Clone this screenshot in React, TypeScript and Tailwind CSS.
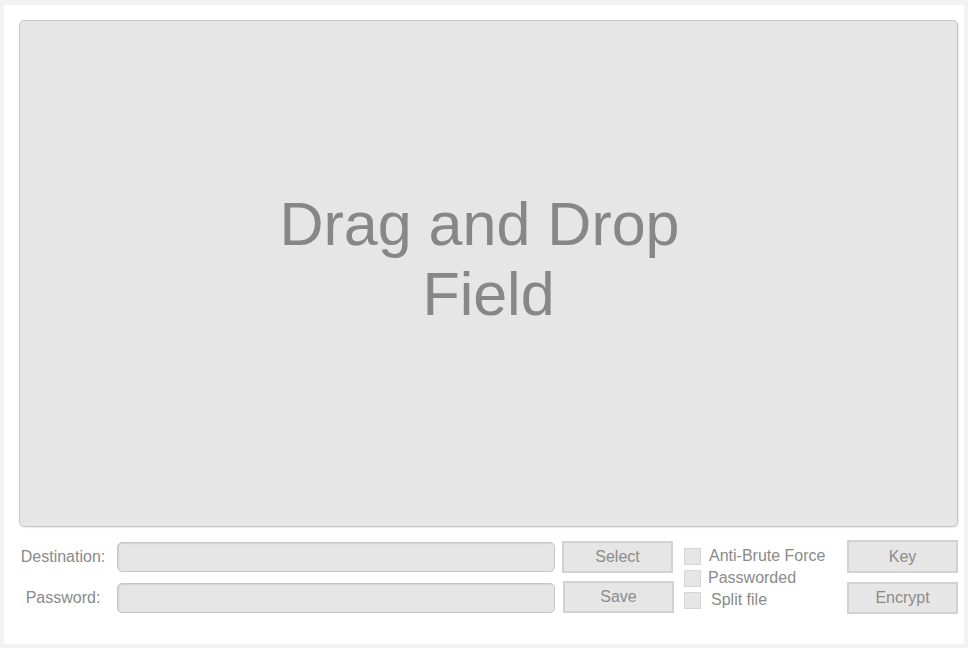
import React from 'react'

const font = { fontFamily: '"Liberation Sans", Arial, sans-serif' }

function Btn({ label, className = '' }: { label: string; className?: string }) {
  return (
    <button
      type="button"
      className={`flex w-[111px] items-center justify-center border-2 border-[#d2d2d2] bg-[#e6e6e6] text-[16px] text-[#8c8c8c] ${className}`}
    >
      {label}
    </button>
  )
}

function Check({ label, className = '' }: { label: string; className?: string }) {
  return (
    <label className="flex h-[22px] items-center">
      <span className="h-[17px] w-[17px] border border-[#d6d6d6] bg-[#e6e6e6]" />
      <span className={`text-[16px] text-[#8a8a8a] ${className}`}>{label}</span>
    </label>
  )
}

export default function App() {
  return (
    <div className="h-[648px] w-[968px] bg-[#f3f3f3] pb-[4px] pl-[4px] pr-[4px] pt-[5px]" style={font}>
      <div className="flex h-full flex-col bg-white pb-[4px] pl-[15px] pr-[6px] pt-[15px]">
        {/* drop zone */}
        <div className="flex h-[507px] flex-col items-center justify-center rounded-[5px] border border-[#c6c6c6] bg-[#e6e6e7] pb-[30px] shadow-[1px_1px_1px_rgba(0,0,0,0.08)]">
          <div className="text-center text-[61px] leading-[70px] text-[#878787]">
            <div className="pr-[18px]">Drag and Drop</div>
            <div>Field</div>
          </div>
        </div>

        {/* controls */}
        <div className="mt-[13px] flex items-start">
          <div className="flex w-[88px] flex-col gap-[11px] pt-[2px]">
            <div className="flex h-[30px] items-center justify-center text-[16px] text-[#8a8a8a]">Destination:</div>
            <div className="flex h-[30px] items-center justify-center text-[16px] text-[#8a8a8a]">Password:</div>
          </div>

          <div className="ml-[10px] flex w-[438px] flex-col gap-[11px] pt-[2px]">
            <div className="h-[30px] rounded-[5px] border border-[#c6c6c6] bg-[#e5e5e6] shadow-[inset_1px_1px_1px_rgba(0,0,0,0.08)]" />
            <div className="h-[30px] rounded-[5px] border border-[#c6c6c6] bg-[#e5e5e6] shadow-[inset_1px_1px_1px_rgba(0,0,0,0.08)]" />
          </div>

          <div className="ml-[7px] flex flex-col gap-[8px] pt-[1px]">
            <Btn label="Select" className="h-[32px]" />
            <Btn label="Save" className="ml-[1px] h-[32px]" />
          </div>

          <div className="ml-[10px] flex flex-col pt-[5px]">
            <Check label="Anti-Brute Force" className="ml-[8px]" />
            <Check label="Passworded" className="ml-[7px]" />
            <Check label="Split file" className="ml-[10px]" />
          </div>

          <div className="ml-auto flex flex-col gap-[9px]">
            <Btn label="Key" className="h-[33px]" />
            <Btn label="Encrypt" className="h-[32px]" />
          </div>
        </div>
      </div>
    </div>
  )
}
